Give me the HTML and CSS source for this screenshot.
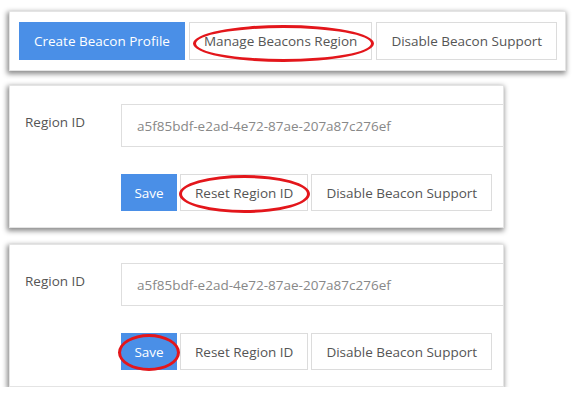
FILE: index.html
```html
<!DOCTYPE html>
<html lang="en">
<head>
    <meta charset="UTF-8">
    <title>Beacon Settings</title>
    <link rel="stylesheet" href="styles.css">
</head>
<body>
    <div class="steps">
        <div class="panel panel-wide">
            <div class="actions">
                <button class="btn btn-primary">Create Beacon Profile</button>
                <button class="btn">Manage Beacons Region<span class="ring ring-manage"></span></button>
                <button class="btn">Disable Beacon Support</button>
            </div>
        </div>

        <div class="panel">
            <div class="field">
                <label class="label" for="region1">Region ID</label>
                <input class="input" id="region1" type="text" value="a5f85bdf-e2ad-4e72-87ae-207a87c276ef">
            </div>
            <div class="actions actions-form">
                <button class="btn btn-primary btn-save">Save</button>
                <button class="btn">Reset Region ID<span class="ring ring-reset"></span></button>
                <button class="btn">Disable Beacon Support</button>
            </div>
        </div>

        <div class="panel panel-last">
            <div class="field">
                <label class="label" for="region2">Region ID</label>
                <input class="input" id="region2" type="text" value="a5f85bdf-e2ad-4e72-87ae-207a87c276ef">
            </div>
            <div class="actions actions-form">
                <button class="btn btn-primary btn-save">Save<span class="ring ring-save"></span></button>
                <button class="btn">Reset Region ID</button>
                <button class="btn">Disable Beacon Support</button>
            </div>
        </div>
    </div>
</body>
</html>
```

FILE: styles.css
```css
body {
    margin: 0;
    background-color: #fff;
    font-family: "Open Sans", "Liberation Sans", sans-serif;
    color: #555;
}
.steps {
    display: flex;
    flex-direction: column;
    align-items: flex-start;
    gap: 14px;
    padding: 11px 0 0 9px;
}
.panel {
    width: 495px;
    box-sizing: border-box;
    padding: 18px 0 16px 15px;
    background-color: #fff;
    border: 1px solid #e4e4e4;
    box-shadow: -1px 2px 5px 1px rgba(0, 0, 0, 0.45);
    overflow: hidden;
}
.panel-wide {
    width: 557px;
    padding: 10px 10px 10px 9px;
}
.panel-last {
    margin-top: 2px;
}
.actions {
    display: flex;
    gap: 4px;
}
.actions-form {
    margin: 27px 0 0 96px;
    gap: 3px;
}
.btn {
    position: relative;
    flex: none;
    height: 38px;
    padding: 0 14px;
    background-color: #fff;
    border: 1px solid #dcdcdc;
    border-radius: 0;
    font-family: inherit;
    font-size: 13.5px;
    color: #555;
    white-space: nowrap;
}
.actions-form .btn {
    height: 37px;
}
.btn-primary {
    background-color: #4a8fe7;
    border-color: #4a8fe7;
    color: #fff;
}
.btn-save {
    width: 56px;
    padding: 0;
}
.field {
    display: flex;
    align-items: flex-start;
}
.label {
    flex: none;
    width: 96px;
    padding-top: 9px;
    font-size: 13.5px;
}
.input {
    flex: none;
    width: 420px;
    height: 43px;
    box-sizing: border-box;
    padding: 0 15px;
    border: 1px solid #dedede;
    font-family: inherit;
    font-size: 13.5px;
    color: #888;
}
.ring {
    position: absolute;
    border: 3px solid #e3161b;
    border-radius: 50%;
}
.ring-manage {
    left: 3px;
    right: -3px;
    top: 2px;
    bottom: -3px;
}
.ring-reset {
    left: -2px;
    right: -3px;
    top: 0;
    bottom: -3px;
}
.ring-save {
    left: -4px;
    right: -4px;
    top: 0;
    bottom: -2px;
}
```
